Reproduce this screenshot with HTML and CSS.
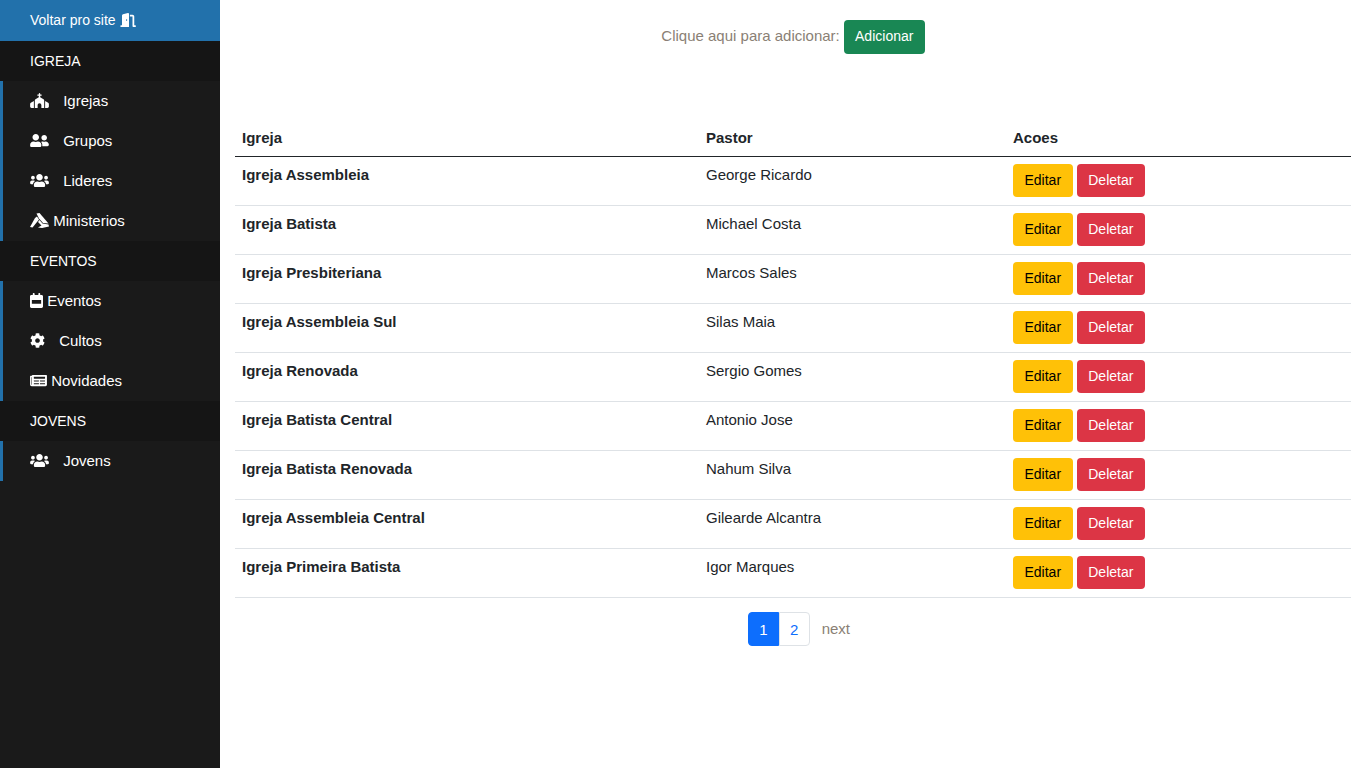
FILE: index.html
```html
<!DOCTYPE html>
<html lang="en">
<head>
  <meta charset="UTF-8">
  <meta name="viewport" content="width=device-width, initial-scale=1.0">
  <title>Igrejas</title>
  <link rel="stylesheet" href="styles.css">
</head>

<body>
  <aside class="sidebar">
    <a class="back-link" href="#">Voltar pro site
      <svg class="icon" width="18" height="14" viewBox="0 0 640 512"><path d="M320 32c0-9.9-4.5-19.2-12.3-25.2S289.8-1.4 280.2 1l-179.9 45C79 51.3 64 70.5 64 92.5V448H32c-17.7 0-32 14.3-32 32s14.3 32 32 32H96 288h32V480 32zM256 256c0 17.7-10.7 32-24 32s-24-14.3-24-32s10.7-32 24-32s24 14.3 24 32zm96-128h96V480c0 17.7 14.3 32 32 32h64c17.7 0 32-14.3 32-32s-14.3-32-32-32H512V128c0-35.3-28.7-64-64-64H352v64z"/></svg>
    </a>

    <div class="side-title">IGREJA</div>
    <ul class="side-group">
      <li><a href="#">
        <svg class="icon wide" width="19" height="15" viewBox="0 0 640 512"><path d="M344 24c0-13.3-10.7-24-24-24s-24 10.7-24 24V48H264c-13.3 0-24 10.7-24 24s10.7 24 24 24h32v46.4L183.3 210c-14.5 8.7-23.3 24.3-23.3 41.2V512h96V416c0-35.3 28.7-64 64-64s64 28.7 64 64v96h96V251.2c0-16.9-8.8-32.5-23.3-41.2L344 142.4V96h32c13.3 0 24-10.7 24-24s-10.7-24-24-24H344V24zM24.9 330.3C9.5 338.8 0 354.9 0 372.4V464c0 26.5 21.5 48 48 48h80V273.6L24.9 330.3zM592 512c26.5 0 48-21.5 48-48V372.4c0-17.5-9.5-33.6-24.9-42.1L512 273.600V512h80z"/></svg>
        Igrejas</a></li>
      <li><a href="#">
        <svg class="icon wide" width="19" height="15" viewBox="0 0 640 512"><path d="M192 256c61.9 0 112-50.1 112-112S253.9 32 192 32 80 82.1 80 144s50.1 112 112 112zm76.8 32h-8.3c-20.8 10-43.9 16-68.5 16s-47.6-6-68.5-16h-8.3C51.6 288 0 339.6 0 403.2V432c0 26.5 21.5 48 48 48h288c26.5 0 48-21.5 48-48v-28.8c0-63.6-51.6-115.2-115.2-115.2zM480 256c53 0 96-43 96-96s-43-96-96-96-96 43-96 96 43 96 96 96zm48 32h-3.8c-13.9 4.8-28.6 8-44.2 8s-30.3-3.2-44.2-8H432c-20.4 0-39.2 5.9-55.7 15.4 24.4 26.3 39.7 61.2 39.7 99.8v38.4c0 2.2-.5 4.3-.6 6.4H592c26.5 0 48-21.5 48-48 0-61.9-50.1-112-112-112z"/></svg>
        Grupos</a></li>
      <li><a href="#">
        <svg class="icon wide" width="19" height="15" viewBox="0 0 640 512"><path d="M96 224c35.3 0 64-28.7 64-64s-28.7-64-64-64-64 28.7-64 64 28.7 64 64 64zm448 0c35.3 0 64-28.7 64-64s-28.7-64-64-64-64 28.7-64 64 28.7 64 64 64zm32 32h-64c-17.6 0-33.5 7.1-45.1 18.6 40.3 22.1 68.9 62 75.1 109.4h66c17.7 0 32-14.3 32-32v-32c0-35.3-28.7-64-64-64zm-256 0c61.9 0 112-50.1 112-112S381.9 32 320 32 208 82.1 208 144s50.1 112 112 112zm76.8 32h-8.3c-20.8 10-43.9 16-68.5 16s-47.6-6-68.5-16h-8.3C179.6 288 128 339.6 128 403.2V432c0 26.5 21.5 48 48 48h288c26.5 0 48-21.5 48-48v-28.8c0-63.6-51.6-115.2-115.2-115.2zm-223.7-13.4C161.5 263.1 145.6 256 128 256H64c-35.3 0-64 28.7-64 64v32c0 17.7 14.3 32 32 32h65.9c6.3-47.4 34.9-87.3 75.2-109.4z"/></svg>
        Lideres</a></li>
      <li><a href="#">
        <svg class="icon" width="19" height="15" viewBox="0 0 19 15"><path d="M6.500 0.500L9.500 0L18.500 10.500L13 10L9 5.500Z"/><path d="M5 5L7 3.500L9 6.500L2.500 14.500L0 14Z"/><path d="M9.500 7L12.500 10.500L18.500 11.500L19 13.500L12 15L8 14.500L11.500 12.500L8 9Z"/></svg>
        Ministerios</a></li>
    </ul>

    <div class="side-title">EVENTOS</div>
    <ul class="side-group">
      <li><a href="#">
        <svg class="icon" width="13" height="15" viewBox="0 0 448 512"><path fill-rule="evenodd" d="M128 0c17.700 0 32 14.300 32 32V64H288V32c0-17.700 14.300-32 32-32s32 14.300 32 32V64h48c26.500 0 48 21.500 48 48v352c0 26.500-21.500 48-48 48H48c-26.500 0-48-21.500-48-48V112C0 85.500 21.500 64 48 64H96V32c0-17.700 14.300-32 32-32zM64 240v128h320V240z"/></svg>
        Eventos</a></li>
      <li><a class="mid" href="#">
        <svg class="icon" width="15" height="15" viewBox="0 0 512 512"><path d="M487.4 315.7l-42.6-24.6c4.3-23.2 4.3-47 0-70.2l42.6-24.6c4.9-2.8 7.1-8.6 5.5-14-11.1-35.6-30-67.8-54.7-94.6-3.8-4.1-10-5.1-14.8-2.3L380.8 110c-17.9-15.4-38.5-27.3-60.8-35.1V25.8c0-5.6-3.9-10.5-9.4-11.7-36.7-8.2-74.3-7.8-109.2 0-5.5 1.2-9.4 6.1-9.4 11.7V75c-22.2 7.9-42.8 19.8-60.8 35.1L88.7 85.5c-4.9-2.8-11-1.9-14.8 2.3-24.7 26.7-43.6 58.9-54.7 94.6-1.7 5.4.6 11.2 5.5 14L67.3 221c-4.3 23.2-4.3 47 0 70.2l-42.6 24.6c-4.9 2.8-7.1 8.6-5.5 14 11.1 35.6 30 67.8 54.7 94.6 3.8 4.1 10 5.1 14.8 2.3l42.6-24.6c17.9 15.4 38.5 27.3 60.8 35.1v49.2c0 5.6 3.9 10.5 9.4 11.7 36.7 8.2 74.3 7.8 109.2 0 5.5-1.2 9.4-6.1 9.4-11.7v-49.2c22.2-7.9 42.8-19.8 60.8-35.1l42.6 24.6c4.9 2.8 11 1.9 14.8-2.3 24.7-26.700 43.600-58.900 54.700-94.600 1.500-5.500-.7-11.300-5.600-14.100zM256 336c-44.100 0-80-35.900-80-80s35.900-80 80-80 80 35.900 80 80-35.900 80-80 80z"/></svg>
        Cultos</a></li>
      <li><a href="#">
        <svg class="icon" width="17" height="15" viewBox="0 0 576 512"><path d="M552 64H88c-13.255 0-24 10.745-24 24v8H24c-13.255 0-24 10.745-24 24v272c0 30.928 25.072 56 56 56h472c26.51 0 48-21.49 48-48V88c0-13.255-10.745-24-24-24zM56 400a8 8 0 0 1-8-8V144h16v248a8 8 0 0 1-8 8zm236-16H140c-6.627 0-12-5.373-12-12v-8c0-6.627 5.373-12 12-12h152c6.627 0 12 5.373 12 12v8c0 6.627-5.373 12-12 12zm208 0H348c-6.627 0-12-5.373-12-12v-8c0-6.627 5.373-12 12-12h152c6.627 0 12 5.373 12 12v8c0 6.627-5.373 12-12 12zm-208-96H140c-6.627 0-12-5.373-12-12v-8c0-6.627 5.373-12 12-12h152c6.627 0 12 5.373 12 12v8c0 6.627-5.373 12-12 12zm208 0H348c-6.627 0-12-5.373-12-12v-8c0-6.627 5.373-12 12-12h152c6.627 0 12 5.373 12 12v8c0 6.627-5.373 12-12 12zm0-96H140c-6.627 0-12-5.373-12-12v-40c0-6.627 5.373-12 12-12h360c6.627 0 12 5.373 12 12v40c0 6.627-5.373 12-12 12z"/></svg>
        Novidades</a></li>
    </ul>

    <div class="side-title">JOVENS</div>
    <ul class="side-group">
      <li><a href="#">
        <svg class="icon wide" width="19" height="15" viewBox="0 0 640 512"><path d="M96 224c35.3 0 64-28.7 64-64s-28.7-64-64-64-64 28.7-64 64 28.7 64 64 64zm448 0c35.3 0 64-28.7 64-64s-28.7-64-64-64-64 28.7-64 64 28.7 64 64 64zm32 32h-64c-17.6 0-33.5 7.1-45.1 18.6 40.3 22.1 68.9 62 75.1 109.4h66c17.7 0 32-14.3 32-32v-32c0-35.3-28.7-64-64-64zm-256 0c61.9 0 112-50.1 112-112S381.9 32 320 32 208 82.1 208 144s50.1 112 112 112zm76.8 32h-8.3c-20.8 10-43.9 16-68.5 16s-47.6-6-68.5-16h-8.3C179.6 288 128 339.6 128 403.2V432c0 26.5 21.5 48 48 48h288c26.5 0 48-21.5 48-48v-28.8c0-63.6-51.6-115.2-115.2-115.2zm-223.7-13.4C161.5 263.1 145.6 256 128 256H64c-35.3 0-64 28.7-64 64v32c0 17.7 14.3 32 32 32h65.9c6.3-47.4 34.9-87.3 75.2-109.4z"/></svg>
        Jovens</a></li>
    </ul>
  </aside>

  <main class="content">
    <div class="add-row"><span class="add-label">Clique aqui para adicionar:</span> <a class="btn btn-green" href="#">Adicionar</a></div>

    <table class="churches">
      <thead>
        <tr>
          <th class="col-name">Igreja</th>
          <th class="col-pastor">Pastor</th>
          <th>Acoes</th>
        </tr>
      </thead>
      <tbody>
        <tr><th>Igreja Assembleia</th><td>George Ricardo</td><td><a class="btn btn-yellow" href="#">Editar</a> <a class="btn btn-red" href="#">Deletar</a></td></tr>
        <tr><th>Igreja Batista</th><td>Michael Costa</td><td><a class="btn btn-yellow" href="#">Editar</a> <a class="btn btn-red" href="#">Deletar</a></td></tr>
        <tr><th>Igreja Presbiteriana</th><td>Marcos Sales</td><td><a class="btn btn-yellow" href="#">Editar</a> <a class="btn btn-red" href="#">Deletar</a></td></tr>
        <tr><th>Igreja Assembleia Sul</th><td>Silas Maia</td><td><a class="btn btn-yellow" href="#">Editar</a> <a class="btn btn-red" href="#">Deletar</a></td></tr>
        <tr><th>Igreja Renovada</th><td>Sergio Gomes</td><td><a class="btn btn-yellow" href="#">Editar</a> <a class="btn btn-red" href="#">Deletar</a></td></tr>
        <tr><th>Igreja Batista Central</th><td>Antonio Jose</td><td><a class="btn btn-yellow" href="#">Editar</a> <a class="btn btn-red" href="#">Deletar</a></td></tr>
        <tr><th>Igreja Batista Renovada</th><td>Nahum Silva</td><td><a class="btn btn-yellow" href="#">Editar</a> <a class="btn btn-red" href="#">Deletar</a></td></tr>
        <tr><th>Igreja Assembleia Central</th><td>Gilearde Alcantra</td><td><a class="btn btn-yellow" href="#">Editar</a> <a class="btn btn-red" href="#">Deletar</a></td></tr>
        <tr><th>Igreja Primeira Batista</th><td>Igor Marques</td><td><a class="btn btn-yellow" href="#">Editar</a> <a class="btn btn-red" href="#">Deletar</a></td></tr>
      </tbody>
    </table>

    <nav class="pager">
      <a class="page page-on" href="#">1</a>
      <a class="page" href="#">2</a>
      <a class="page-next" href="#">next</a>
    </nav>
  </main>
</body>
</html>
```

FILE: styles.css
```css
* {
  box-sizing: border-box;
}
html, body {
  height: 100%;
}
body {
  display: flex;
  margin: 0;
  font-family: "Liberation Sans", Arial, sans-serif;
  font-size: 15px;
  line-height: 1.5;
  color: #212529;
  background: #fff;
}
a {
  text-decoration: none;
}

/* sidebar */
.sidebar {
  flex: 0 0 220px;
  min-height: 768px;
  background: #1a1a1a;
  color: #fff;
}
.icon {
  fill: #fff;
  vertical-align: -2px;
}
.icon.wide {
  margin-right: 10px;
}
.back-link {
  display: block;
  height: 41px;
  padding: 10px 0 0 30px;
  font-size: 14px;
  color: #fff;
  background: #2271ab;
}
.side-title {
  height: 40px;
  padding: 10px 0 0 30px;
  font-size: 14px;
  background: #151515;
}
.side-group {
  margin: 0;
  padding: 0;
  list-style: none;
  border-left: 3px solid #2271ab;
}
.side-group a {
  display: block;
  height: 40px;
  padding: 9px 0 0 27px;
  color: #fff;
}
.side-group a.mid .icon {
  margin-right: 10px;
}

/* main area */
.content {
  flex: 1;
  padding: 20px 15px 0;
}
.add-row {
  display: flex;
  justify-content: center;
  align-items: center;
  gap: 4px;
  height: 34px;
  margin: 0 0 65px;
  color: #8a7f75;
}
.add-label {
  padding-bottom: 2px;
}
.btn {
  display: inline-block;
  height: 33px;
  padding: 5px 11.5px;
  font-size: 14px;
  line-height: 23px;
  border-radius: 4px;
}
.btn-green {
  height: 34px;
  padding: 5px 11.25px;
  color: #fff;
  background: #198754;
}
.btn-yellow {
  color: #000;
  background: #ffc107;
}
.btn-red {
  color: #fff;
  background: #dc3545;
}

/* table */
.churches {
  width: 100%;
  border-collapse: collapse;
}
.churches th, .churches td {
  padding: 7px 7px 8px;
  text-align: left;
  vertical-align: top;
  border-bottom: 1px solid #dee2e6;
}
.churches thead th {
  padding: 8px 7px 6px;
  border-bottom: 1px solid #212529;
}
.col-name {
  width: 464px;
}
.col-pastor {
  width: 307px;
}

/* pagination */
.pager {
  display: flex;
  justify-content: center;
  margin-top: 14px;
  padding-left: 24px;
}
.page, .page-next {
  display: block;
  height: 34px;
  padding: 5px 10.25px;
  font-size: 15px;
  line-height: 23px;
}
.page {
  color: #0d6efd;
  border: 1px solid #dee2e6;
  border-radius: 0 4px 4px 0;
}
.page-on {
  color: #fff;
  background: #0d6efd;
  border-color: #0d6efd;
  border-radius: 4px 0 0 4px;
}
.page-next {
  padding: 5px 12px;
  color: #8a7f75;
}
```
